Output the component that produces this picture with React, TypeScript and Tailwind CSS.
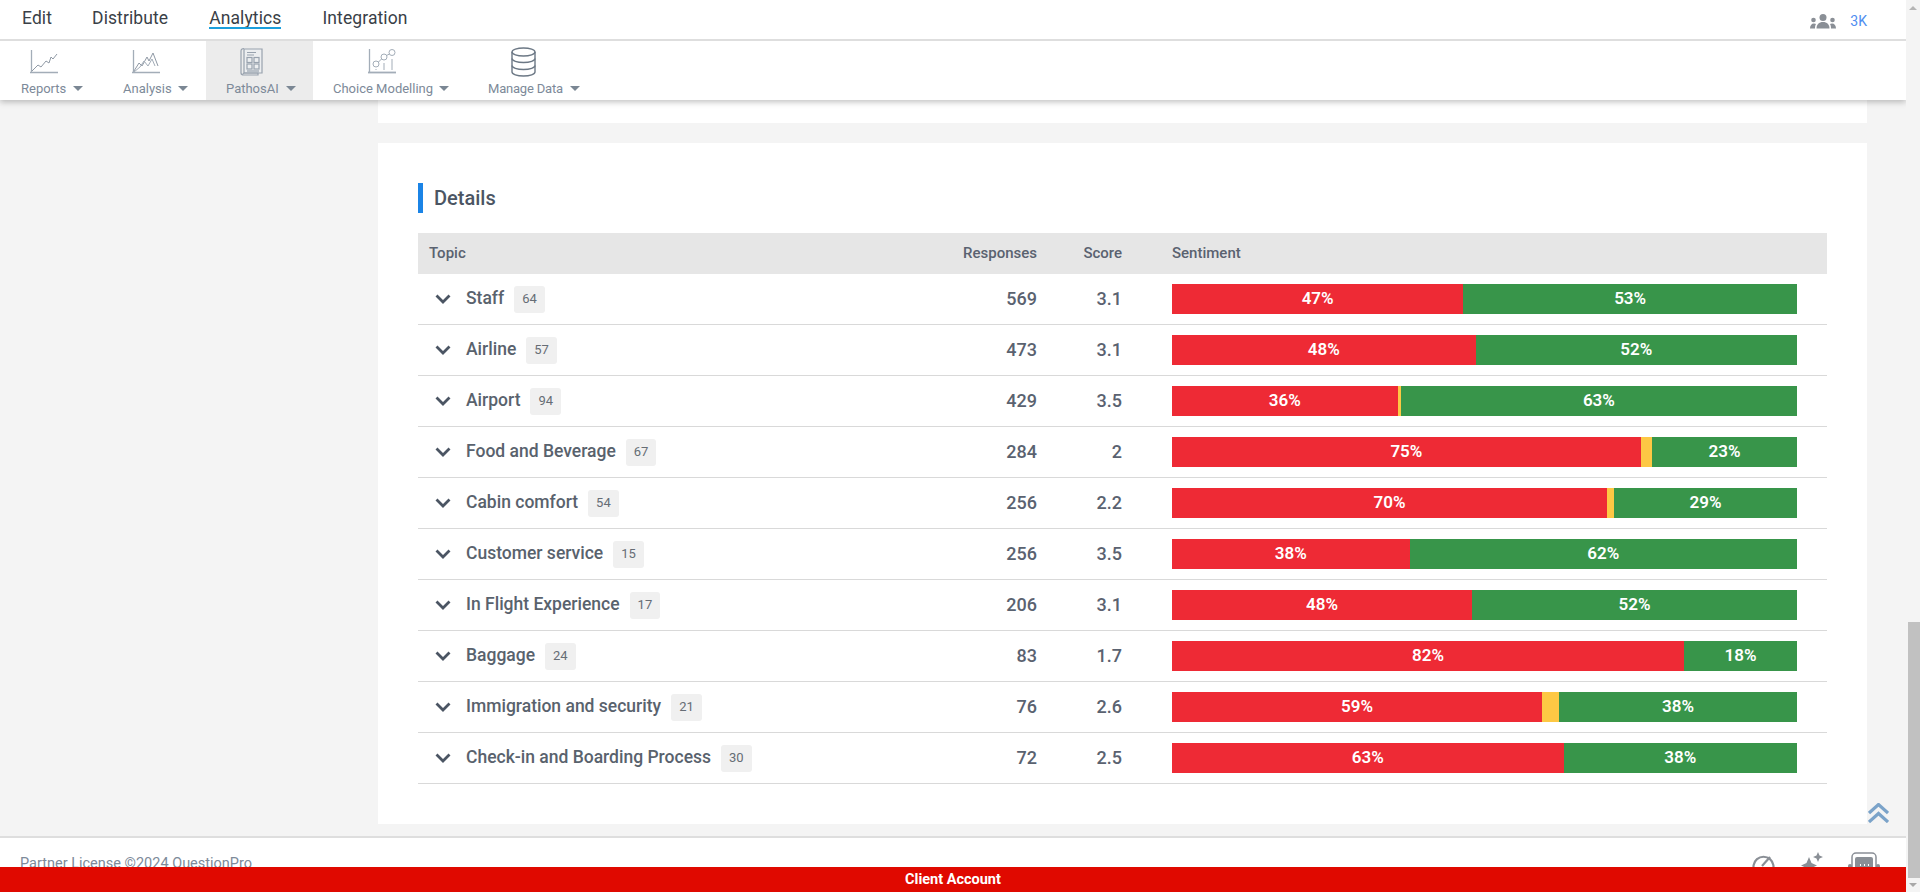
import React from "react";

const rows = [
  { t: "Staff", b: 64, r: 569, s: "3.1", red: 46.6, yel: 0, rl: "47%", gl: "53%" },
  { t: "Airline", b: 57, r: 473, s: "3.1", red: 48.56, yel: 0, rl: "48%", gl: "52%" },
  { t: "Airport", b: 94, r: 429, s: "3.5", red: 36.1, yel: 0.5, rl: "36%", gl: "63%" },
  { t: "Food and Beverage", b: 67, r: 284, s: "2", red: 75, yel: 1.8, rl: "75%", gl: "23%" },
  { t: "Cabin comfort", b: 54, r: 256, s: "2.2", red: 69.6, yel: 1.15, rl: "70%", gl: "29%" },
  { t: "Customer service", b: 15, r: 256, s: "3.5", red: 38, yel: 0, rl: "38%", gl: "62%" },
  { t: "In Flight Experience", b: 17, r: 206, s: "3.1", red: 48, yel: 0, rl: "48%", gl: "52%" },
  { t: "Baggage", b: 24, r: 83, s: "1.7", red: 81.9, yel: 0, rl: "82%", gl: "18%" },
  { t: "Immigration and security", b: 21, r: 76, s: "2.6", red: 59.2, yel: 2.7, rl: "59%", gl: "38%" },
  { t: "Check-in and Boarding Process", b: 30, r: 72, s: "2.5", red: 62.65, yel: 0, rl: "63%", gl: "38%" },
];

function Caret() {
  return <span className="inline-block w-0 h-0 border-l-[5.500px] border-r-[5.500px] border-t-[5px] border-l-transparent border-r-transparent border-t-[#7b8794]" />;
}

function ReportsIcon() {
  return (
    <svg width="28" height="24" viewBox="0 0 28 24" fill="none" stroke="#a3adb8" strokeWidth="1">
      <path d="M1.500 0v23M0 22.500h28" strokeWidth="1.300" />
      <path d="M2 21l6-6 3 2 5-6 3 2 2-6 2 2 4-5" stroke="#8f99a5" />
    </svg>
  );
}
function AnalysisIcon() {
  return (
    <svg width="28" height="24" viewBox="0 0 28 24" fill="none" stroke="#a3adb8" strokeWidth="1">
      <path d="M1.500 0v23M0 22.500h28" strokeWidth="1.300" />
      <path d="M2 21l5-8 3 3 5-9 2 4 4-8 5 13" stroke="#8f99a5" />
      <path d="M2 22l6-5 4-6 4 5 4-7 3 7" stroke="#a3adb8" />
    </svg>
  );
}
function PathosIcon() {
  return (
    <svg width="23" height="29" viewBox="0 0 23 29" fill="none" stroke="#98a2ae" strokeWidth="1.200">
      <path d="M4 2h18v24H4" fill="#eceef0" />
      <path d="M4 1.500C2 1.500 1 2.500 1 4v22c0 1.500 1 2 3 2h14v-2H4.500C3.500 26 3 26.500 3 27" />
      <path d="M4 2v24" />
      <path d="M7 5.500h9M7 8h7" />
      <rect x="7" y="10.500" width="5" height="5" />
      <rect x="14" y="10.500" width="5" height="5" />
      <rect x="7" y="17" width="5" height="5" />
      <rect x="14" y="17" width="5" height="5" />
      <path d="M7 24h12" />
    </svg>
  );
}
function ChoiceIcon() {
  return (
    <svg width="28" height="25" viewBox="0 0 28 25" fill="none" stroke="#a3adb8" strokeWidth="1">
      <path d="M1.500 0v24" strokeWidth="1.300" />
      <path d="M0 23.500h28" strokeWidth="1.800" />
      <circle cx="8" cy="15" r="3" />
      <circle cx="16" cy="8" r="3" />
      <circle cx="24" cy="3.500" r="3" />
      <path d="M10.500 13l3-3M18.500 6.500l3-1.500" />
      <path d="M8 20v1M16 14v7M24 10v11" />
    </svg>
  );
}
function DataIcon() {
  return (
    <svg width="25" height="30" viewBox="0 0 25 30" fill="none" stroke="#6c7885" strokeWidth="1.400">
      <ellipse cx="12.500" cy="5" rx="11.500" ry="4" />
      <path d="M1 5v20c0 2.200 5 4 11.500 4S24 27.200 24 25V5" />
      <path d="M1 11.500c0 2.200 5 4 11.500 4S24 13.700 24 11.500" />
      <path d="M1 18.500c0 2.200 5 4 11.500 4S24 20.700 24 18.500" />
    </svg>
  );
}

const tools = [
  { label: "Reports", icon: <ReportsIcon />, cls: "w-[102px] pl-[21px]", iconCls: "pl-[9px]", gap: "gap-[7px]" },
  { label: "Analysis", icon: <AnalysisIcon />, cls: "w-[104px] pl-[21px]", iconCls: "pl-[9px]", gap: "gap-[6px]" },
  { label: "PathosAI", icon: <PathosIcon />, cls: "w-[107px] pl-[20px] bg-[#ececec]", iconCls: "pl-[14px]", gap: "gap-[7px]" },
  { label: "Choice Modelling", icon: <ChoiceIcon />, cls: "w-[155px] pl-[20px]", iconCls: "pl-[35px]", gap: "gap-[6px]" },
  { label: "Manage Data", icon: <DataIcon />, cls: "w-[130px] pl-[20px] tracking-[-0.2px]", iconCls: "pl-[23px]", gap: "gap-[7px]" },
];

export default function App() {
  return (
    <div className="flex h-[892px] w-[1920px] overflow-hidden bg-[#f4f4f4] font-['Roboto',sans-serif]">
      <div className="relative flex w-[1906px] flex-col">
        <header className="relative z-10 h-[100px] shrink-0 bg-white shadow-[0_2px_6px_rgba(0,0,0,0.25)]">
          <div className="flex h-[41px] items-start border-b-2 border-[#dedede] pr-[39px]">
            <nav className="flex flex-1 gap-[41px] pl-[22px] pt-[8px] text-[17.500px] leading-5 tracking-[0.1px] text-[#3a3f47]">
              <span>Edit</span>
              <span className="-ml-[1px]">Distribute</span>
              <span className="relative">
                Analytics
                <span className="absolute -bottom-[1px] left-0 right-0 h-[2px] bg-[#1b9fdc]" />
              </span>
              <span>Integration</span>
            </nav>
            <div className="flex items-center gap-[14px] pt-[13px]">
              <svg width="26" height="15" viewBox="0 0 26 15" fill="#8a8f96">
                <circle cx="13" cy="3.500" r="3.500" />
                <path d="M6.500 14.500c0-4 2.500-6.500 6.500-6.500s6.500 2.500 6.500 6.500z" />
                <circle cx="3.500" cy="6" r="2.300" />
                <path d="M0 14.500c0-3 1.500-5 4-5 1 0 1.500.2 2 .5-.8 1.300-1 2.700-1 4.500z" />
                <circle cx="22.500" cy="6" r="2.300" />
                <path d="M26 14.500c0-3-1.500-5-4-5-1 0-1.500.2-2 .5.800 1.300 1 2.700 1 4.500z" />
              </svg>
              <span className="text-[14px] leading-4 text-[#4f8ef0]">3K</span>
            </div>
          </div>
          <div className="flex h-[59px]">
            {tools.map((t) => (
              <div key={t.label} className={"flex h-full flex-col " + t.cls}>
                <div className={"flex h-[41px] shrink-0 items-center " + t.iconCls}>{t.icon}</div>
                <div className={"flex items-center whitespace-nowrap text-[13px] leading-[13px] text-[#7d8a99] " + t.gap}>
                  <span>{t.label}</span>
                  <Caret />
                </div>
              </div>
            ))}
          </div>
        </header>

        <main className="min-h-0 flex-1 pl-[378px] pr-[39px]">
          <div className="h-[23px] bg-white" />
          <section className="mt-[20px] bg-white px-[40px] pb-[40px] pt-[40px]">
            <div className="flex h-[30px] items-center border-l-[5px] border-[#1b84e6] pl-[11px]">
              <h2 className="text-[20px] font-medium leading-6 text-[#4b5563]">Details</h2>
            </div>
            <div className="mt-[20px] flex h-[41px] items-center bg-[#e6e6e6] text-[15px] font-medium text-[#5a6270]">
              <div className="flex-1 pl-[11px]">Topic</div>
              <div className="w-[120px] text-right">Responses</div>
              <div className="w-[85px] text-right">Score</div>
              <div className="w-[705px] pl-[50px]">Sentiment</div>
            </div>
            {rows.map((r) => (
              <div key={r.t} className="flex h-[51px] items-center border-b border-[#d9d9d9]">
                <div className="flex flex-1 items-center">
                  <svg className="ml-[17px]" width="16" height="10" viewBox="0 0 16 10" fill="none" stroke="#4b5563" strokeWidth="2.800">
                    <path d="M1.500 1.500L8 8l6.500-6.500" />
                  </svg>
                  <span className="ml-[15px] pb-[2px] text-[17.500px] font-medium text-[#59626d]">{r.t}</span>
                  <span className="ml-[10px] flex h-[27px] items-center rounded-[3px] bg-[#f0f0f0] px-[8px] text-[13px] text-[#666d75]">{r.b}</span>
                </div>
                <div className="w-[120px] pb-[2px] text-right text-[18px] font-medium text-[#5a6270]">{r.r}</div>
                <div className="w-[85px] pb-[2px] text-right text-[18px] font-medium text-[#5a6270]">{r.s}</div>
                <div className="w-[705px] pl-[50px]">
                  <div className="flex h-[30px] w-[625px] text-[17px] font-semibold text-white">
                    <div className="flex items-center justify-center bg-[#ee2a35]" style={{ width: r.red + "%" }}>{r.rl}</div>
                    {r.yel > 0 && <div className="bg-[#fdc844]" style={{ width: r.yel + "%" }} />}
                    <div className="flex flex-1 items-center justify-center bg-[#38954a]">{r.gl}</div>
                  </div>
                </div>
              </div>
            ))}
          </section>
        </main>

        <svg className="absolute bottom-[69px] left-[1868px]" width="21" height="20" viewBox="0 0 21 20" fill="none" stroke="#7ba3c9" strokeWidth="3.200">
          <path d="M1 10L10.500 1.500 20 10M1 19l9.500-8.500L20 19" />
        </svg>

        <footer className="flex h-[31px] shrink-0 justify-between overflow-hidden border-t-2 border-[#dedede] bg-white pl-[20px] pr-[26px] pt-[18px]">
          <span className="text-[14.500px] leading-4 text-[#7d8a99]">Partner License ©2024 QuestionPro</span>
          <div className="-mt-[4px] flex items-start gap-[25px]">
            <svg width="23" height="23" viewBox="0 0 23 23" fill="none" stroke="#8a8f96" strokeWidth="2.200">
              <path d="M3 20a10 10 0 1 1 17 0" />
              <path d="M10 14L18 5" />
            </svg>
            <svg width="23" height="22" viewBox="0 0 23 22" fill="#8a8f96">
              <path d="M9 5l2.500 6L17 13.500 11.500 16 9 22l-2.500-6L1 13.500 6.500 11z" />
              <path d="M18 0l1.500 3.500L23 5l-3.500 1.500L18 10l-1.500-3.500L13 5l3.500-1.500z" />
            </svg>
            <svg width="32" height="22" viewBox="0 0 32 22" fill="none" stroke="#8a8f96" strokeWidth="1.500">
              <rect x="4" y="1" width="24" height="22" rx="4" />
              <rect x="7" y="5" width="18" height="16" rx="2" fill="#8a8f96" stroke="none" />
              <rect x="0" y="12" width="4" height="10" rx="2" fill="#8a8f96" stroke="none" />
              <rect x="28" y="12" width="4" height="10" rx="2" fill="#8a8f96" stroke="none" />
              <path d="M12 13h1M16 13h1M20 13h1" stroke="#fff" strokeWidth="2" />
            </svg>
          </div>
        </footer>
        <div className="flex h-[25px] shrink-0 items-center justify-center bg-[#e00900] text-[14.500px] font-bold text-white">Client Account</div>
      </div>

      <div className="relative z-20 flex w-[14px] flex-col items-center bg-[#f4f4f4] pt-[6px]">
        <span className="h-0 w-0 border-x-[4px] border-b-[4px] border-x-transparent border-b-[#b5b5b5]" />
        <div className="mb-[5px] mt-auto h-[256px] w-[12px] self-end bg-[#c1c1c1]" />
        <span className="mb-[5px] h-0 w-0 border-x-[4px] border-t-[4px] border-x-transparent border-t-[#a8a8a8]" />
      </div>
    </div>
  );
}
